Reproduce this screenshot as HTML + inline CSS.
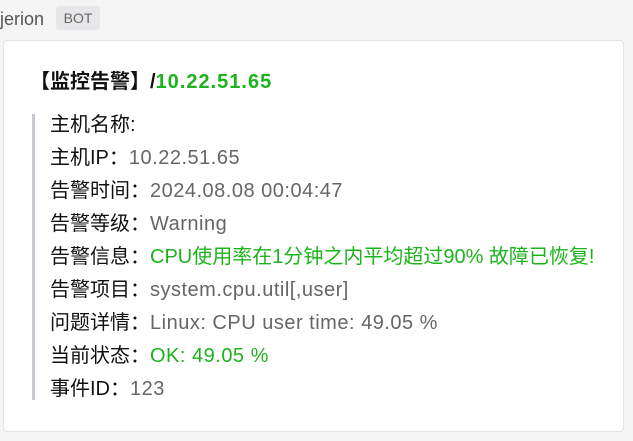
<!DOCTYPE html>
<html><head><meta charset="utf-8"><style>
body{margin:0;width:633px;height:441px;background:#f5f5f6;font-family:"Liberation Sans","Noto Sans CJK SC",sans-serif;overflow:hidden;position:relative}
.name{position:absolute;left:0;top:7px;font-size:18px;color:#555;line-height:24px}
.bot{position:absolute;left:56px;top:6px;width:44px;height:24px;background:#e7e7ea;border-radius:3px;font-size:14px;color:#666;text-align:center;line-height:24px}
.card{position:absolute;left:3px;top:40px;width:619px;height:390px;background:#fff;border:1px solid #e2e2e4;border-radius:4px}
.title{position:absolute;left:30px;top:69px;font-size:20px;font-weight:bold;color:#111;line-height:26px}
.title .g{letter-spacing:1px}
.g{color:#1db31d}
.bar{position:absolute;left:32px;top:114px;width:3px;height:286px;background:#c5cad3}
.lines{position:absolute;left:50px;top:109px;font-size:20px;line-height:33px;color:#111;white-space:nowrap}
.v{color:#666}
.lines span{letter-spacing:0.5px}
.lines span.m{letter-spacing:0}
</style></head><body>
<div class="name">jerion</div><div class="bot">BOT</div>
<div class="card"></div>
<div class="title">【监控告警】/<span class="g">10.22.51.65</span></div>
<div class="bar"></div>
<div class="lines">
<div>主机名称:</div>
<div>主机IP：<span class="v">10.22.51.65</span></div>
<div>告警时间：<span class="v">2024.08.08 00:04:47</span></div>
<div>告警等级：<span class="v">Warning</span></div>
<div>告警信息：<span class="g m">CPU使用率在1分钟之内平均超过90% 故障已恢复!</span></div>
<div>告警项目：<span class="v">system.cpu.util[,user]</span></div>
<div>问题详情：<span class="v">Linux: CPU user time: 49.05 %</span></div>
<div>当前状态：<span class="g">OK: 49.05 %</span></div>
<div>事件ID：<span class="v">123</span></div>
</div>
</body></html>
